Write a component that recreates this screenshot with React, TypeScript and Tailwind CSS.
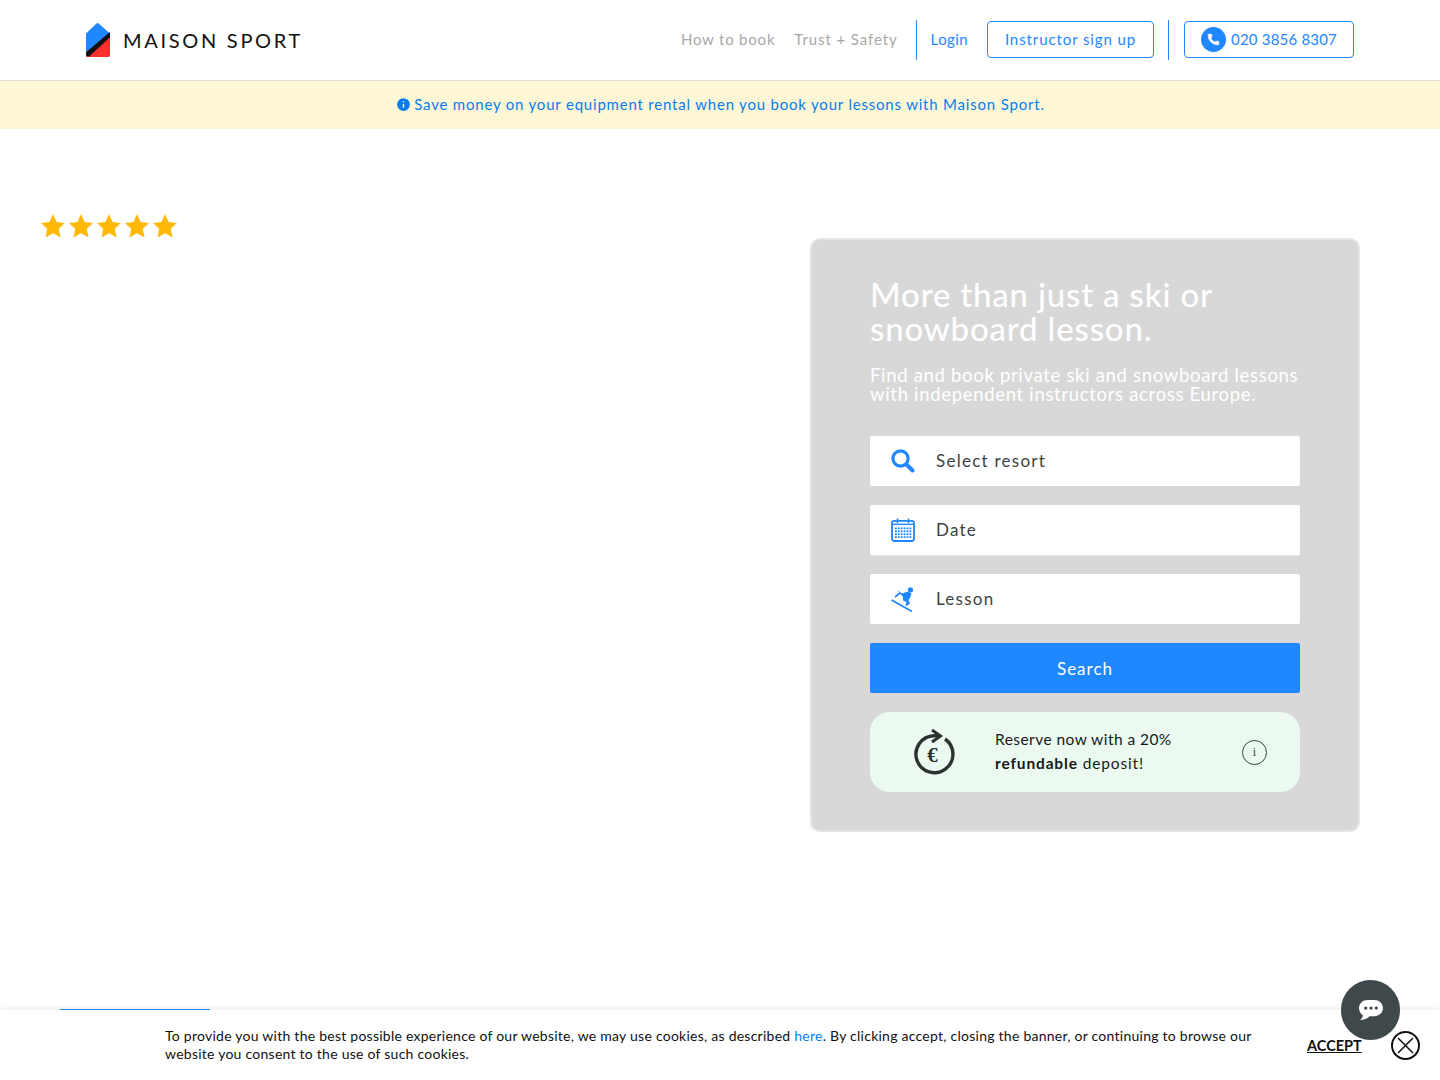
import { Info, Phone } from 'lucide-react';

const FONT = 'font-["Lato","Liberation_Sans",sans-serif]';

function Logo() {
    return (
        <svg width="24" height="34" viewBox="0 0 24 36" preserveAspectRatio="none" className="block">
            <path d="M12 0 L24 11 V34 a2 2 0 0 1 -2 2 H2 a2 2 0 0 1 -2 -2 V11 L10 1 a3 3 0 0 1 2 -1z" fill="#1f87ff" />
            <path d="M24 13.5 V34 a2 2 0 0 1 -2 2 H2 a2 2 0 0 1 -2 -2 V32z" fill="#f8312f" />
            <path d="M24 9.5 V15 L3 35.6 H2 a2 2 0 0 1 -2 -2 V31z" fill="#111" />
        </svg>
    );
}

function Star() {
    return (
        <svg width="24" height="24" viewBox="0 0 24 24">
            <path d="M12 0 L15.6 8 L24 9 L17.8 14.8 L19.5 23.5 L12 19.2 L4.5 23.5 L6.2 14.8 L0 9 L8.4 8z" fill="#ffb909" />
        </svg>
    );
}

function SearchIcon() {
    return (
        <svg width="24" height="24" viewBox="0 0 24 24">
            <circle cx="9.5" cy="9.5" r="7.6" fill="none" stroke="#1f87ff" strokeWidth="3.2" />
            <path d="M15.5 15.5 L21.5 21.5" stroke="#1f87ff" strokeWidth="4" strokeLinecap="round" />
        </svg>
    );
}

function CalendarIcon() {
    const dots = [];
    for (let r = 0; r < 4; r++) {
        for (let c = 0; c < 6; c++) {
            dots.push(<rect key={`${r}-${c}`} x={4 + c * 2.9} y={9.5 + r * 2.9} width="1.8" height="1.8" fill="#1f87ff" />);
        }
    }
    return (
        <svg width="24" height="24" viewBox="0 0 24 24">
            <rect x="1" y="2.8" width="22" height="20.2" rx="2.2" fill="none" stroke="#1f87ff" strokeWidth="1.8" />
            <rect x="1" y="5.6" width="22" height="1.4" fill="#1f87ff" />
            <path d="M6.5 0.5 V5 M17.5 0.5 V5" stroke="#1f87ff" strokeWidth="1.6" />
            {dots}
        </svg>
    );
}

function SkierIcon() {
    return (
        <svg width="23" height="25" viewBox="0 0 23 25">
            <circle cx="19.5" cy="2.8" r="2.6" fill="#1f87ff" />
            <path d="M6 3 L11 6.5 L17 4.5 L20.5 6.5 L19 11 L17.5 13 L19 16 L16 19 L14.5 18 L15.5 15 L12 13.5 L12 10z" fill="#1f87ff" />
            <path d="M0.5 13 L21 24.5 M4 10 L9 6" stroke="#1f87ff" strokeWidth="1.7" fill="none" />
        </svg>
    );
}

function RefundIcon() {
    return (
        <svg width="42" height="46" viewBox="0 0 42 46">
            <path d="M31 10 A18.5 18.5 0 1 1 20 6.7 H26" fill="none" stroke="#2b3331" strokeWidth="3.4" />
            <path d="M18 1 L26.5 6.9 L18 13" fill="none" stroke="#2b3331" strokeWidth="3" />
            <text x="18.5" y="33" textAnchor="middle" fontSize="21" fontWeight="700" fontFamily="Liberation Serif, serif" fill="#2b3331">€</text>
        </svg>
    );
}

function Field({ icon, label, shadow }: { icon: React.ReactNode; label: string; shadow?: boolean }) {
    return (
        <div className={`flex h-[50px] items-center rounded-[2px] bg-white ${shadow ? 'shadow-[0_1px_0_#e9e9e9]' : ''}`}>
            <div className="flex w-[66px] justify-center pr-[1px]">{icon}</div>
            <span className="text-[17px] tracking-[1.25px] text-[#3d4345]">{label}</span>
        </div>
    );
}

export default function App() {
    return (
        <div className={`relative h-[1080px] overflow-hidden bg-white ${FONT}`}>
            {/* Header */}
            <header className="flex h-[81px] items-center justify-between border-b border-[#dcdcdc] pl-[86px] pr-[86px]">
                <div className="flex items-center gap-[13px]">
                    <Logo />
                    <span className="text-[20px] font-normal tracking-[2.7px] text-[#111]">MAISON SPORT</span>
                </div>
                <nav className="flex items-center text-[15px] tracking-[0.9px]">
                    <a className="mb-[2px] tracking-[0.8px] text-[#a8a8a8]">How to book</a>
                    <a className="mb-[2px] ml-[19px] text-[#a8a8a8]">Trust + Safety</a>
                    <div className="ml-[18px] h-10 w-px bg-[#1f87ff]" />
                    <a className="mb-[2px] ml-[14px] tracking-[0.4px] text-[#1f87ff]">Login</a>
                    <a className="mb-[2px] ml-[19px] flex h-[37px] w-[167px] items-center justify-center rounded-[4px] border border-[#1f87ff] text-[#1f87ff]">
                        Instructor sign up
                    </a>
                    <div className="ml-[14px] h-10 w-px bg-[#1f87ff]" />
                    <a className="mb-[2px] ml-[15px] flex h-[37px] w-[170px] items-center justify-center gap-[5px] rounded-[4px] border border-[#1f87ff] tracking-[0.2px] text-[#1f87ff]">
                        <span className="flex h-[25px] w-[25px] items-center justify-center rounded-full bg-[#1f87ff]">
                            <Phone size={13} fill="white" stroke="white" strokeWidth={1} />
                        </span>
                        020 3856 8307
                    </a>
                </nav>
            </header>

            {/* Banner */}
            <div className="flex h-12 items-center justify-center gap-[2px] bg-[#fdf7d5] pb-[2px] text-[15px] tracking-[0.8px] text-[#0a7cf0]">
                <Info size={17} fill="#0a7cf0" stroke="#fdf7d5" />
                Save money on your equipment rental when you book your lessons with Maison Sport.
            </div>

            {/* Main */}
            <main className="flex items-start justify-between pl-[41px] pr-20">
                <div className="mt-[85px] flex gap-1">
                    <Star />
                    <Star />
                    <Star />
                    <Star />
                    <Star />
                </div>
                <section className="mt-[109px] h-[594px] w-[550px] rounded-[10px] border-2 border-[#e4e4e4] bg-[#d8d8d8] px-[58px] pt-[37px]">
                    <h1 className="text-[33px] font-medium leading-[34px] tracking-[0.8px] text-white">
                        More than just a ski or snowboard lesson.
                    </h1>
                    <p className="mt-[21px] text-[18.5px] leading-[19px] tracking-[0.68px] text-white">
                        Find and book private ski and snowboard lessons with independent instructors across Europe.
                    </p>
                    <div className="mt-[32px] flex flex-col gap-[19px]">
                        <Field icon={<SearchIcon />} label="Select resort" />
                        <Field icon={<CalendarIcon />} label="Date" shadow />
                        <Field icon={<SkierIcon />} label="Lesson" />
                        <button className="flex h-[50px] items-center justify-center rounded-[2px] bg-[#1f87ff] pt-[2px] text-[17px] tracking-[1px] text-white">
                            Search
                        </button>
                        <div className="flex h-20 items-center rounded-[20px] bg-[#ebf9f1]">
                            <div className="flex w-[125px] justify-center pl-[4px]">
                                <RefundIcon />
                            </div>
                            <p className="flex-1 pb-[2px] text-[15.5px] leading-6 tracking-[0.85px] text-[#16191a]">
                                <span className="tracking-[0.45px]">Reserve now with a 20%</span>
                                <br />
                                <b>refundable</b> deposit!
                            </p>
                            <span className="mr-[33px] flex h-[25px] w-[25px] items-center justify-center rounded-full border border-[#3d4345] font-['Liberation_Serif',serif] text-[12px] text-[#3d4345]">
                                i
                            </span>
                        </div>
                    </div>
                </section>
            </main>

            {/* Cookie bar */}
            <div className="absolute bottom-0 left-0 right-0 h-[70px] bg-white pl-[165px] pt-[17px] shadow-[0_-2px_6px_rgba(0,0,0,0.08)]">
                <div className="absolute left-[60px] top-[-1px] h-px w-[150px] bg-[#1f87ff]" />
                <p className="w-[1100px] text-[14px] leading-[18px] tracking-[0.25px] text-[#111]">
                    To provide you with the best possible experience of our website, we may use cookies, as described{' '}
                    <a className="text-[#0a7cf0]">here</a>. By clicking accept, closing the banner, or continuing to browse our website you consent to the use of such cookies.
                </p>
                <a className="absolute left-[1307px] top-[25px] text-[14.5px] font-bold text-[#111] underline">ACCEPT</a>
                <span className="absolute left-[1391px] top-[21px] flex h-[29px] w-[29px] items-center justify-center rounded-full border-2 border-[#111]">
                    <svg width="17" height="17" viewBox="0 0 17 17">
                        <path d="M1 1 L16 16 M16 1 L1 16" stroke="#111" strokeWidth="1.5" />
                    </svg>
                </span>
            </div>

            {/* Chat */}
            <div className="absolute left-[1341px] top-[980px] flex h-[60px] w-[59px] items-center justify-center rounded-full bg-[#3f484b]">
                <svg width="24" height="22" viewBox="0 0 25 23">
                    <path d="M9 1 H16 C21 1 25 4.5 25 9.5 C25 14.5 21 18 16 18 H11 C9 20 5 22 1 22 C3 20.5 4 19 4 17 C1.5 15.5 0 13 0 9.5 C0 4.5 4 1 9 1z" fill="white" />
                    <circle cx="7" cy="9.5" r="1.7" fill="#3f484b" />
                    <circle cx="12.5" cy="9.5" r="1.7" fill="#3f484b" />
                    <circle cx="18" cy="9.5" r="1.7" fill="#3f484b" />
                </svg>
            </div>
        </div>
    );
}
